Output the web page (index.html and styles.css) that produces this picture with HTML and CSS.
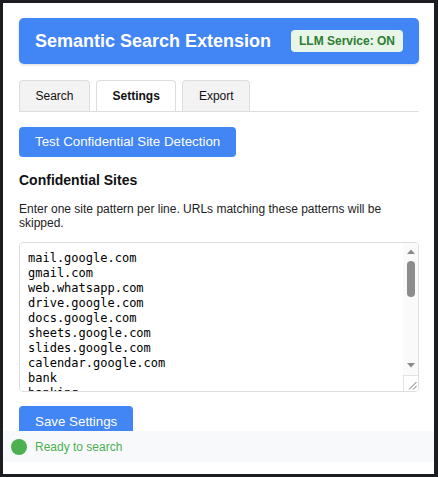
FILE: index.html
```html
<!DOCTYPE html>
<html lang="en">
<head>
<meta charset="utf-8">
<title>Semantic Search Extension</title>
<link rel="stylesheet" href="styles.css">
</head>
<body>
<div class="popup">
  <div class="content">
    <header class="header">
      <h1 class="title">Semantic Search Extension</h1>
      <span class="badge">LLM Service: ON</span>
    </header>
    <nav class="tabs">
      <button class="tab">Search</button>
      <button class="tab tab-active">Settings</button>
      <button class="tab">Export</button>
    </nav>
    <section class="settings">
      <button class="btn">Test Confidential Site Detection</button>
      <h2 class="section-title">Confidential Sites</h2>
      <p class="desc">Enter one site pattern per line. URLs matching these patterns will be skipped.</p>
      <div class="editor">
        <textarea class="sites" spellcheck="false">mail.google.com
gmail.com
web.whatsapp.com
drive.google.com
docs.google.com
sheets.google.com
slides.google.com
calendar.google.com
bank
banking
paypal.com
chase.com
wellsfargo.com
bankofamerica.com
login
signin
account
checkout
password
outlook.live.com
outlook.office.com
mail.yahoo.com
protonmail.com
messenger.com
health
medical</textarea>
        <div class="scrollbar" aria-hidden="true">
          <div class="sb-btn sb-up">
            <svg width="15" height="15" viewBox="0 0 15 15"><polygon points="4,11 12,11 8,6.5" fill="#8a8a8a"/></svg>
          </div>
          <div class="sb-track"><div class="sb-thumb"></div></div>
          <div class="sb-btn sb-down">
            <svg width="15" height="15" viewBox="0 0 15 15"><polygon points="4,4 12,4 8,8.5" fill="#8a8a8a"/></svg>
          </div>
          <div class="sb-corner">
            <svg width="14" height="15" viewBox="0 0 14 15"><line x1="5" y1="13.5" x2="12.5" y2="6" stroke="#6f6f6f" stroke-width="1"/><line x1="9" y1="13.5" x2="12.5" y2="10" stroke="#6f6f6f" stroke-width="1"/></svg>
          </div>
        </div>
      </div>
      <button class="btn btn-save">Save Settings</button>
    </section>
  </div>
  <footer class="status">
    <span class="status-dot"></span>
    <span class="status-text">Ready to search</span>
  </footer>
</div>
</body>
</html>
```
FILE: styles.css
```css
html, body {
  margin: 0;
  padding: 0;
}
body {
  background: #1c1d20;
  width: 438px;
  height: 477px;
  overflow: hidden;
  font-family: "Liberation Sans", Arial, sans-serif;
}
.popup {
  position: relative;
  margin: 3px;
  width: 431px;
  height: 471px;
  background: #ffffff;
  overflow: hidden;
}
.content {
  padding: 15px 15px 0 16px;
}
.header {
  display: flex;
  align-items: center;
  justify-content: space-between;
  height: 46px;
  padding: 0 16px;
  background: #4285f4;
  border-radius: 5px;
  box-shadow: 0 1px 3px rgba(0,0,0,0.15);
}
.title {
  margin: 0;
  font-size: 18px;
  font-weight: bold;
  color: #ffffff;
}
.badge {
  padding: 4px 8px;
  background: #e8f5e9;
  color: #2e7d32;
  font-size: 12px;
  font-weight: bold;
  border-radius: 4px;
  line-height: 14px;
}
.tabs {
  display: flex;
  gap: 6px;
  margin-top: 16px;
  border-bottom: 1px solid #dddddd;
}
.tab {
  font-family: "Liberation Sans", Arial, sans-serif;
  font-size: 12px;
  color: #111;
  padding: 8px 15.5px 8px;
  line-height: 14px;
  background: #f3f3f3;
  border: 1px solid #dddddd;
  border-bottom: none;
  border-radius: 4px 4px 0 0;
  margin: 0;
}
.tab-active {
  background: #ffffff;
  font-weight: bold;
}
.settings {
  padding-top: 15px;
}
.btn {
  display: block;
  font-family: "Liberation Sans", Arial, sans-serif;
  font-size: 13.33px;
  line-height: 16px;
  color: #ffffff;
  background: #4285f4;
  border: none;
  border-radius: 4px;
  padding: 7px 16px;
  margin: 0;
}
.section-title {
  margin: 15px 0 0;
  font-size: 14px;
  line-height: 17px;
  font-weight: bold;
  color: #111;
}
.desc {
  margin: 14px 0 0;
  font-size: 12px;
  line-height: 13.5px;
  color: #222;
}
.editor {
  display: flex;
  box-sizing: border-box;
  width: 400px;
  height: 150px;
  margin-top: 12px;
  border: 1px solid #dddddd;
  border-radius: 4px;
  overflow: hidden;
}
.sites {
  flex: 1;
  min-width: 0;
  box-sizing: border-box;
  margin: 0;
  padding: 8px;
  border: none;
  outline: none;
  font-family: "DejaVu Sans Mono", monospace;
  font-size: 12px;
  line-height: 15px;
  color: #000;
  resize: none;
  overflow: hidden;
}
.scrollbar {
  display: flex;
  flex-direction: column;
  width: 15px;
  flex-shrink: 0;
  background: #fafafa;
}
.sb-btn {
  height: 15px;
  flex-shrink: 0;
}
.sb-btn svg,
.sb-corner svg {
  display: block;
}
.sb-track {
  flex: 1;
  display: flex;
  justify-content: center;
  padding-top: 3px;
}
.sb-thumb {
  width: 8px;
  height: 36px;
  border-radius: 4px;
  background: #8c8c8c;
}
.sb-corner {
  height: 15px;
  flex-shrink: 0;
  margin-top: 1px;
  background: #ffffff;
  border-top: 1px solid #e2e2e2;
  border-left: 1px solid #e2e2e2;
  box-sizing: content-box;
  width: 14px;
}
.btn-save {
  margin-top: 14px;
  padding: 8px 16px;
}
.status {
  position: absolute;
  left: 0;
  right: 0;
  bottom: 12px;
  height: 31px;
  display: flex;
  align-items: center;
  gap: 8px;
  padding: 0 8px;
  background: #f8f9fa;
}
.status-dot {
  width: 16px;
  height: 16px;
  border-radius: 50%;
  background: #4caf50;
}
.status-text {
  font-size: 12px;
  color: #4caf50;
}
```
